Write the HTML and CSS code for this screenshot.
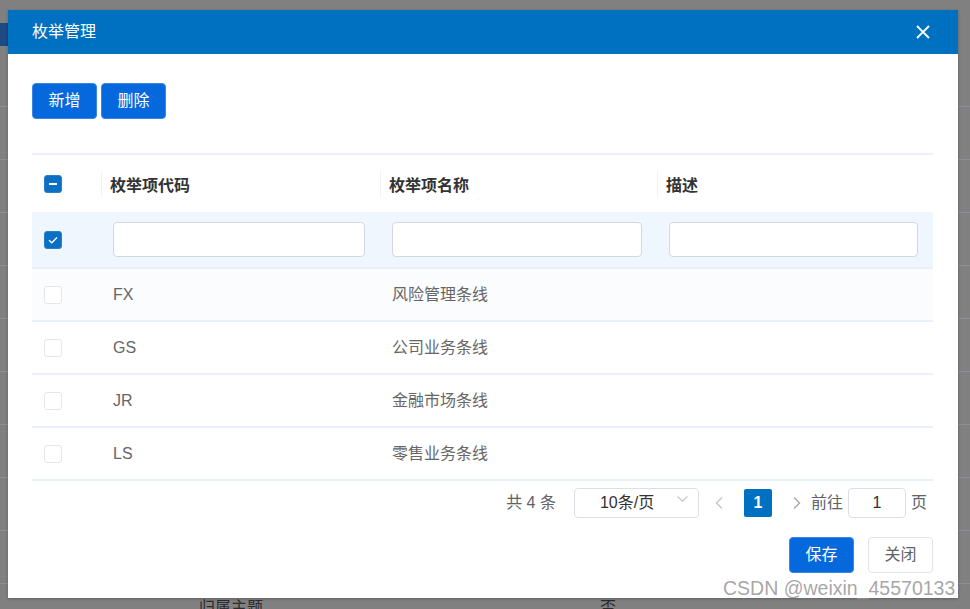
FILE: index.html
```html
<!DOCTYPE html>
<html lang="zh-CN">
<head>
<meta charset="utf-8">
<title>枚举管理</title>
<link rel="stylesheet" href="styles.css">
</head>
<body>
<div class="bg-page">
  <div class="bg-tab"></div>
  <div class="bg-rows">
    <div class="bg-row"></div>
    <div class="bg-row"></div>
    <div class="bg-row"></div>
    <div class="bg-row"></div>
    <div class="bg-row"></div>
    <div class="bg-row"></div>
    <div class="bg-row"></div>
    <div class="bg-row"></div>
    <div class="bg-row"></div>
    <div class="bg-row bg-row-text"><span class="bg-c1">归属主题</span><span class="bg-c2">否</span></div>
  </div>
</div>

<div class="modal">
  <div class="modal-header">
    <span class="modal-title">枚举管理</span>
    <svg class="close-icon" width="14" height="14" viewBox="0 0 14 14"><path d="M1 1 L13 13 M13 1 L1 13" stroke="#fff" stroke-width="1.8" fill="none"/></svg>
  </div>
  <div class="modal-body">
    <div class="toolbar">
      <button class="btn btn-primary">新增</button>
      <button class="btn btn-primary">删除</button>
    </div>
    <div class="table">
      <div class="tr thead">
        <div class="td td-check"><span class="cb cb-on cb-ind"></span></div>
        <div class="td"><span class="th-label">枚举项代码</span></div>
        <div class="td"><span class="th-label">枚举项名称</span></div>
        <div class="td"><span class="th-label">描述</span></div>
      </div>
      <div class="tr filter-row">
        <div class="td td-check"><span class="cb cb-on"><svg width="12" height="10" viewBox="0 0 12 10"><path d="M2 5.2 L4.8 7.8 L10 2.4" stroke="#fff" stroke-width="1.4" fill="none"/></svg></span></div>
        <div class="td"><div class="input"></div></div>
        <div class="td"><div class="input"></div></div>
        <div class="td"><div class="input"></div></div>
      </div>
      <div class="tr row row-striped">
        <div class="td td-check"><span class="cb"></span></div>
        <div class="td">FX</div>
        <div class="td">风险管理条线</div>
        <div class="td"></div>
      </div>
      <div class="tr row">
        <div class="td td-check"><span class="cb"></span></div>
        <div class="td">GS</div>
        <div class="td">公司业务条线</div>
        <div class="td"></div>
      </div>
      <div class="tr row">
        <div class="td td-check"><span class="cb"></span></div>
        <div class="td">JR</div>
        <div class="td">金融市场条线</div>
        <div class="td"></div>
      </div>
      <div class="tr row">
        <div class="td td-check"><span class="cb"></span></div>
        <div class="td">LS</div>
        <div class="td">零售业务条线</div>
        <div class="td"></div>
      </div>
    </div>
    <div class="pagination">
      <span class="total">共 4 条</span>
      <div class="select">
        <span>10条/页</span>
        <svg class="select-arrow" width="11" height="6" viewBox="0 0 11 6"><path d="M0.5 0.5 L5.5 5.2 L10.5 0.5" stroke="#c0c4cc" stroke-width="1.1" fill="none"/></svg>
      </div>
      <span class="pager-btn pager-prev"><svg width="8" height="12" viewBox="0 0 8 12"><path d="M7 0.5 L1.5 6 L7 11.5" stroke="#c0c4cc" stroke-width="1.4" fill="none"/></svg></span>
      <span class="page-num">1</span>
      <span class="pager-btn pager-next"><svg width="8" height="12" viewBox="0 0 8 12"><path d="M1 0.5 L6.5 6 L1 11.5" stroke="#a3a6ad" stroke-width="1.4" fill="none"/></svg></span>
      <span class="jump-label">前往</span>
      <div class="jump-input">1</div>
      <span class="jump-label">页</span>
    </div>
  </div>
  <div class="modal-footer">
    <button class="btn btn-primary">保存</button>
    <button class="btn btn-default">关闭</button>
  </div>
</div>

<div class="watermark">CSDN @weixin_45570133</div>
</body>
</html>
```

FILE: styles.css
```css
html, body {
  margin: 0;
  padding: 0;
}

body {
  width: 970px;
  height: 609px;
  overflow: hidden;
  background: #808080;
  font-family: "Liberation Sans", "Noto Sans CJK SC", sans-serif;
  font-size: 16px;
  position: relative;
}

/* background page (dimmed by the mask) */
.bg-page {
  width: 970px;
}

.bg-tab {
  margin-top: 23px;
  width: 60px;
  height: 23px;
  background: #1e4b84;
}

.bg-rows {
  margin-top: 60px;
}

.bg-row {
  height: 52px;
  border-top: 1px solid #8b8f95;
}

.bg-row-text {
  display: flex;
  align-items: flex-start;
  padding-top: 14px;
  box-sizing: border-box;
  color: #2c2c2c;
  line-height: 20px;
}

.bg-c1 {
  margin-left: 199px;
}

.bg-c2 {
  margin-left: 337px;
}

/* modal */
.modal {
  position: absolute;
  left: 8px;
  top: 10px;
  width: 950px;
  height: 588px;
  background: #fff;
  display: flex;
  flex-direction: column;
  box-shadow: 0 1px 3px rgba(0, 0, 0, 0.25);
}

.modal-header {
  flex: none;
  height: 44px;
  background: #0070c0;
  display: flex;
  align-items: center;
  justify-content: space-between;
  padding: 0 28px 0 24px;
  box-sizing: border-box;
}

.modal-title {
  color: #fff;
  font-size: 16px;
  line-height: 20px;
}

.close-icon {
  display: block;
}

.modal-body {
  flex: 1;
  padding: 29px 25px 0 24px;
}

.toolbar {
  display: flex;
  gap: 4px;
}

.btn {
  width: 65px;
  height: 36px;
  padding: 0;
  border-radius: 4px;
  box-sizing: border-box;
  font-family: "Liberation Sans", "Noto Sans CJK SC", sans-serif;
  font-size: 16px;
  line-height: 1;
  display: inline-flex;
  align-items: center;
  justify-content: center;
}

.btn-primary {
  background: #0568dc;
  border: 1px solid #3a86e2;
  color: #fff;
}

.btn-default {
  background: #fff;
  border: 1px solid #dfe3ea;
  color: #606266;
}

/* table */
.table {
  margin-top: 34px;
  border-top: 2px solid #e8f1fb;
}

.tr {
  display: grid;
  grid-template-columns: 69px 279px 277px 276px;
}

.td {
  display: flex;
  align-items: center;
  padding-left: 12px;
  box-sizing: border-box;
  min-width: 0;
}

.thead {
  height: 57px;
}

.thead .td {
  padding-left: 0;
}

.thead .td-check,
.td-check {
  padding-left: 12px;
}

.th-label {
  height: 26px;
  display: flex;
  align-items: center;
  padding-left: 8px;
  border-left: 1px solid #f0f2f5;
  font-weight: bold;
  color: #333;
}

.filter-row {
  height: 55px;
  background: #f0f6fd;
  border-bottom: 2px solid #e6f0fa;
}

.filter-row .td {
  padding-right: 15px;
}

.input {
  width: 100%;
  height: 35px;
  background: #fff;
  border: 1px solid #d3d8e0;
  border-radius: 4px;
  box-sizing: border-box;
}

.row {
  height: 51px;
  border-bottom: 2px solid #e8f1fb;
  color: #666;
  line-height: 20px;
}

.row-striped {
  background: #fafcfe;
}

/* checkbox */
.cb {
  width: 18px;
  height: 18px;
  box-sizing: border-box;
  border: 1px solid #e3e6eb;
  border-radius: 3px;
  background: #fff;
  display: flex;
  align-items: center;
  justify-content: center;
}

.cb-on {
  background: #0b6fc4;
  border-color: #2a80cc;
}

.cb-ind::after {
  content: "";
  width: 8px;
  height: 2px;
  background: #fff;
}

.cb svg {
  display: block;
}

/* pagination */
.pagination {
  display: flex;
  justify-content: flex-end;
  align-items: center;
  height: 30px;
  margin-top: 7px;
  padding-right: 6px;
  color: #606266;
  line-height: 20px;
}

.select {
  margin-left: 18px;
  width: 125px;
  height: 30px;
  border: 1px solid #dcdfe6;
  border-radius: 4px;
  box-sizing: border-box;
  display: flex;
  align-items: center;
  justify-content: space-between;
  padding: 0 10px 0 25px;
  color: #303133;
}

.select-arrow {
  display: block;
  margin-bottom: 9px;
}

.pager-btn {
  width: 28px;
  height: 28px;
  display: flex;
  align-items: center;
  justify-content: center;
}

.pager-prev {
  margin-left: 6px;
}

.pager-next {
  margin-left: 11px;
}

.pager-btn svg {
  display: block;
}

.page-num {
  margin-left: 11px;
  width: 28px;
  height: 28px;
  background: #0070c0;
  color: #fff;
  font-weight: bold;
  border-radius: 2px;
  display: flex;
  align-items: center;
  justify-content: center;
}

.jump-input {
  width: 58px;
  height: 30px;
  margin: 0 5px;
  border: 1px solid #dcdfe6;
  border-radius: 4px;
  box-sizing: border-box;
  display: flex;
  align-items: center;
  justify-content: center;
  color: #303133;
}

/* footer */
.modal-footer {
  flex: none;
  display: flex;
  justify-content: flex-end;
  gap: 14px;
  padding: 0 25px 25px 0;
}

/* watermark overlay */
.watermark {
  position: absolute;
  left: 723px;
  top: 577px;
  font-family: "Liberation Sans", sans-serif;
  font-size: 19.5px;
  line-height: 23px;
  color: rgba(150, 150, 150, 0.85);
  white-space: nowrap;
}
```
